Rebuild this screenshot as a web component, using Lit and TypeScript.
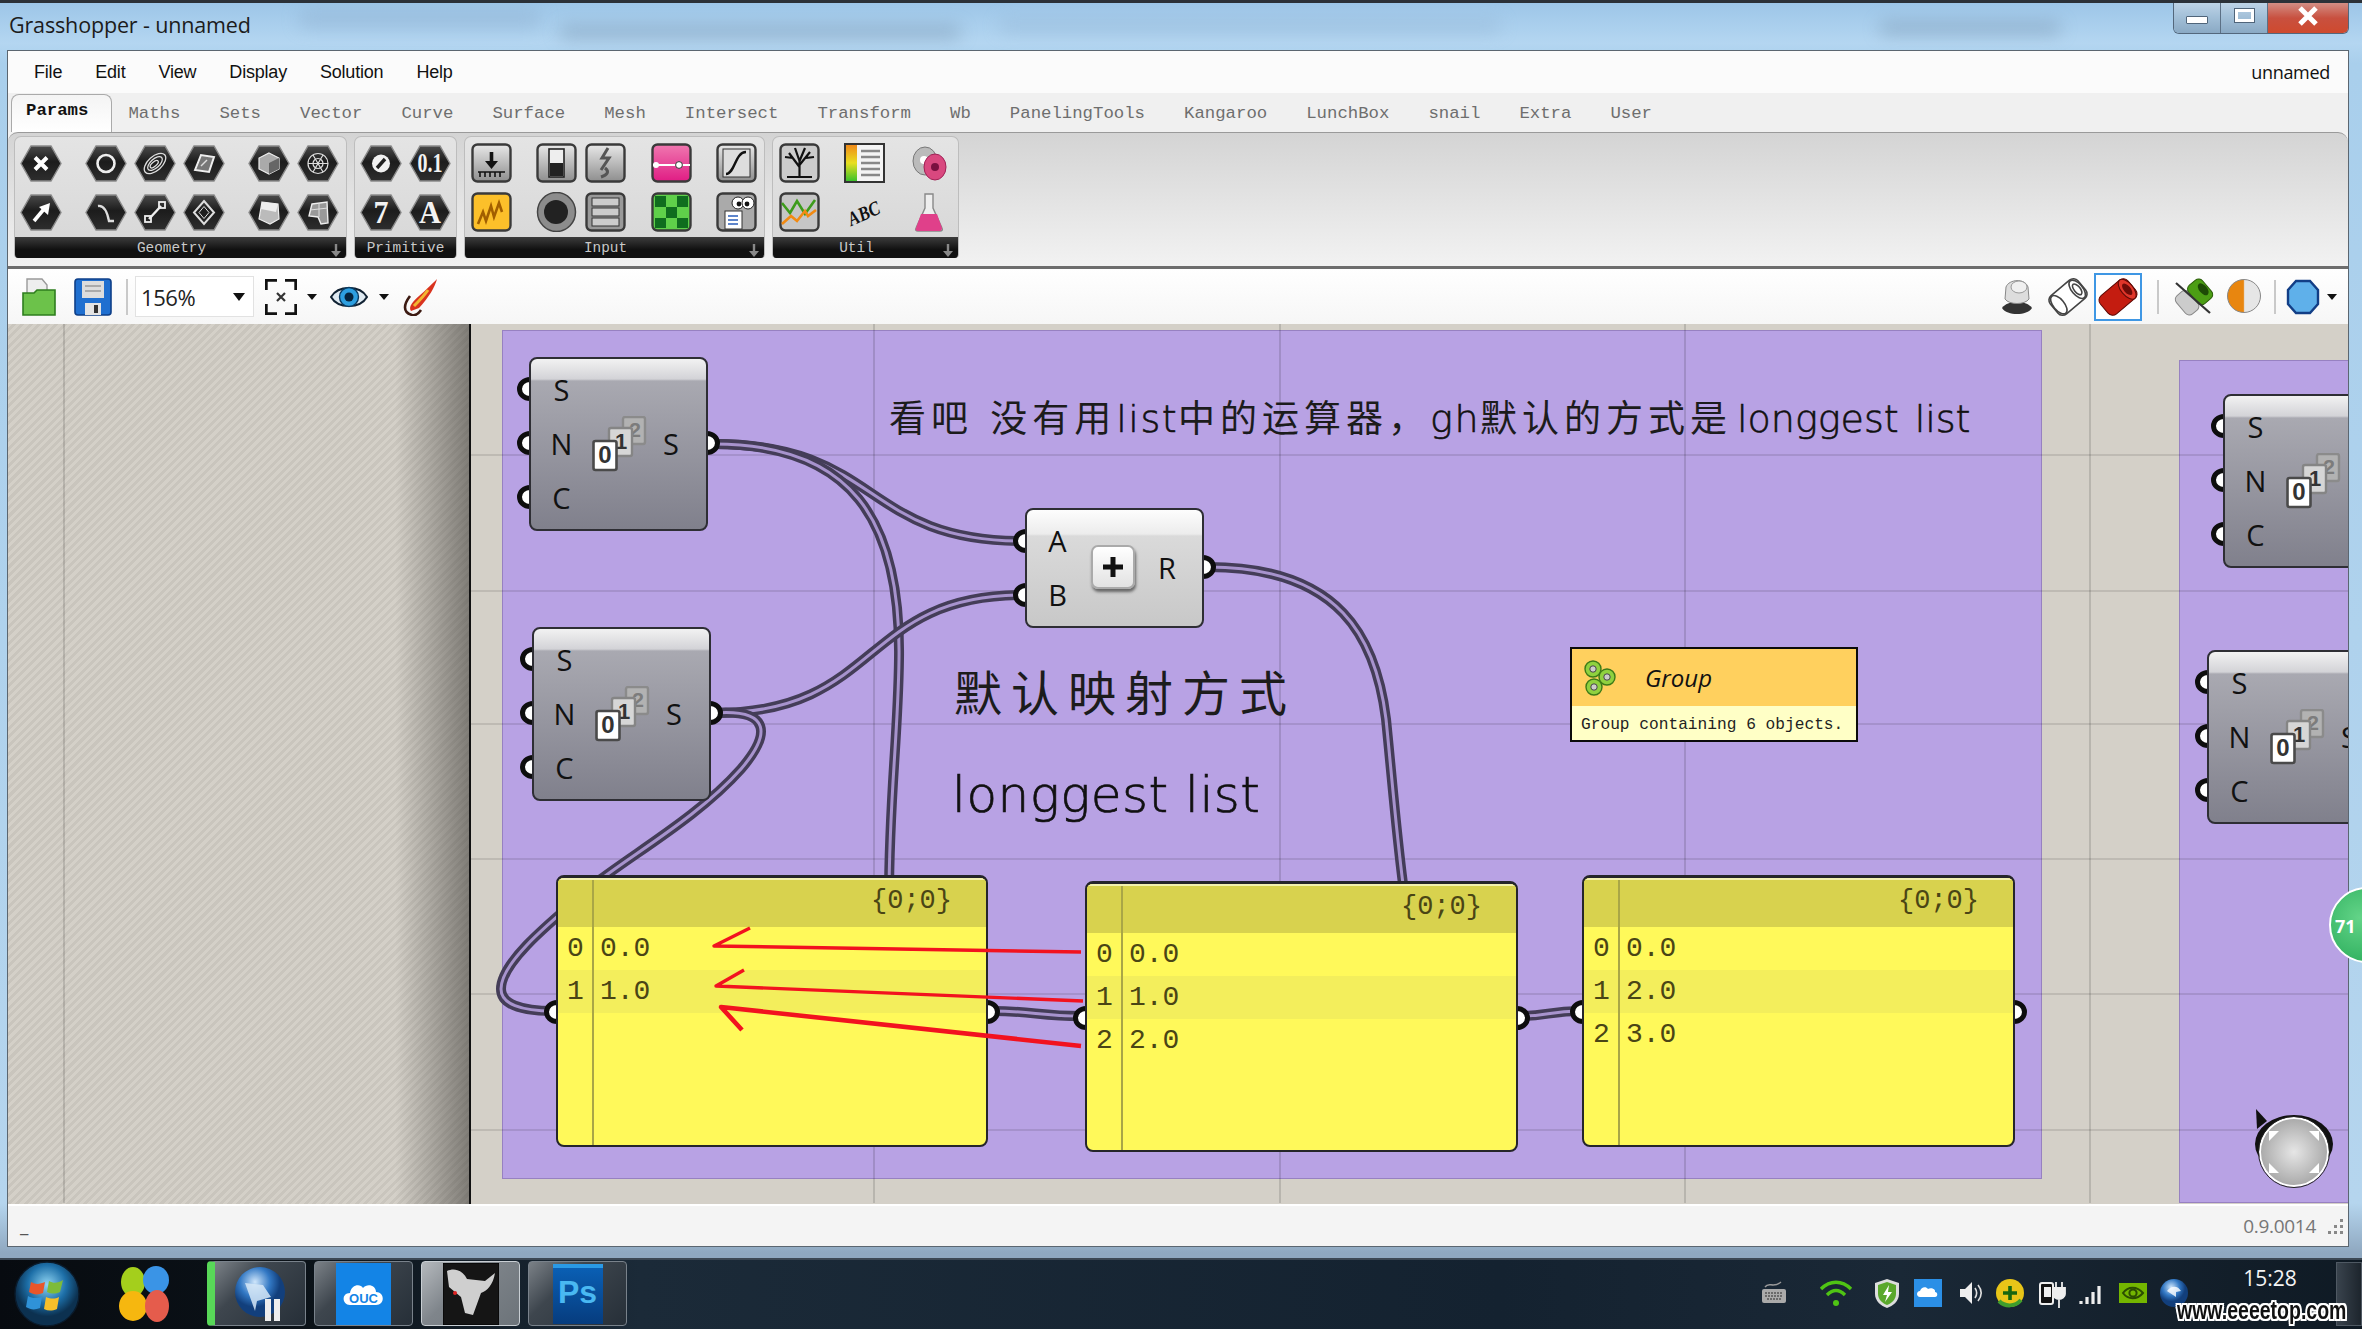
import { LitElement, html, css, svg } from 'lit'
import { customElement } from 'lit/decorators.js'

// canvas origin in page pixels, everything on the canvas is listed in page coords
const OX = 7
const OY = 325

const box = (x: number, y: number, w: number, h: number) =>
  `left:${x - OX}px;top:${y - OY}px;width:${w}px;height:${h}px`

const hex = (inner: unknown) => html`<svg class="ic" viewBox="0 0 42 37" width="42" height="37">
  <polygon points="11,1 31,1 41,18.5 31,36 11,36 1,18.5" fill="url(#hexFill)" stroke="#8a8a8a" stroke-width="1.4" />
  ${inner}
</svg>`

const sq = (inner: unknown, fill = 'url(#sqFill)') => html`<svg class="ic" viewBox="0 0 41 40" width="41" height="40">
  <rect x="1.5" y="1.5" width="38" height="37" rx="5" fill="${fill}" stroke="#3a3a3a" stroke-width="2.4" />
  ${inner}
</svg>`

const plain = (inner: unknown) => html`<svg class="ic" viewBox="0 0 41 40" width="41" height="40">${inner}</svg>`

const hexText = (t: string, size: number, len: number) =>
  svg`<text x="21" y="${18.5 + size * 0.33}" text-anchor="middle" font-family="Liberation Serif" font-weight="bold" font-size="${size}" fill="#f2f2f2" textLength="${len}" lengthAdjust="spacingAndGlyphs">${t}</text>`

const ICONS: Record<string, () => unknown> = {
  point: () => hex(svg`<path d="M15 12.5l12 12M27 12.5l-12 12" stroke="#fff" stroke-width="4" />`),
  circle: () => hex(svg`<circle cx="21" cy="18.5" r="8.5" fill="none" stroke="#eee" stroke-width="2.6" />`),
  curve: () => hex(svg`<g fill="none" stroke="#ddd" stroke-width="1.3" transform="rotate(-42 21 18.5)"><ellipse cx="21" cy="18.5" rx="13" ry="7" /><ellipse cx="21" cy="18.5" rx="9" ry="4.5" /><ellipse cx="20" cy="18.5" rx="5" ry="2.2" /></g>`),
  surface: () => hex(svg`<polygon points="12,25 18,10 31,12 26,27" fill="#777" stroke="#eee" stroke-width="2" /><path d="M18 21l6-6" stroke="#ddd" stroke-width="1.4" />`),
  cube: () => hex(svg`<polygon points="21,8 31,13 31,24 21,29 11,24 11,13" fill="#aaa" stroke="#eee" stroke-width="1.2" /><polygon points="21,18 31,13 31,24 21,29" fill="#666" />`),
  mesh: () => hex(svg`<g stroke="#ddd" stroke-width="1.2" fill="none"><circle cx="21" cy="18.5" r="10" /><circle cx="21" cy="18.5" r="5" /><path d="M11 18.5h20M16 10l10 17M26 10l-10 17" /></g>`),
  vector: () => hex(svg`<path d="M14 27l10-12" stroke="#fff" stroke-width="3.6" /><polygon points="30,9 28,21 19,13" fill="#fff" />`),
  arc: () => hex(svg`<path d="M13 12c6-1 9 5 11 15h5" fill="none" stroke="#ddd" stroke-width="2.4" />`),
  line: () => hex(svg`<path d="M15 25l12-13" stroke="#eee" stroke-width="2.4" /><rect x="11" y="22" width="6" height="6" fill="none" stroke="#eee" stroke-width="1.8" /><rect x="25" y="8" width="6" height="6" fill="none" stroke="#eee" stroke-width="1.8" />`),
  plane: () => hex(svg`<g fill="none" stroke="#ddd"><polygon points="21,7 31,18.5 21,30 11,18.5" stroke-width="2" /><path d="M16 18.5l5-6 5 6-5 6z" stroke-width="1" /></g>`),
  brep: () => hex(svg`<polygon points="14,8 30,10 31,25 22,30 11,25" fill="#bbb" stroke="#eee" stroke-width="1.2" /><polygon points="14,8 30,10 28,18 13,15" fill="#eee" />`),
  geo: () => hex(svg`<polygon points="15,10 30,8 31,29 24,30 21,23 12,22" fill="#999" stroke="#eee" stroke-width="1.4" /><path d="M22 9v14M13 16l18-2" stroke="#ddd" />`),
  bool: () => hex(svg`<circle cx="21" cy="18.5" r="9" fill="#f2f2f2" /><path d="M17 23l8-9" stroke="#222" stroke-width="3.4" />`),
  num: () => hex(hexText('0.1', 27, 25)),
  int: () => hex(hexText('7', 32, 15)),
  text: () => hex(hexText('A', 31, 22)),
  data: () => sq(svg`<path d="M20.5 9v11" stroke="#111" stroke-width="3.6" /><polygon points="14,18 27,18 20.5,26" fill="#111" /><path d="M7 29h27M9 29v5M14 29v5M19 29v5M24 29v5M29 29v5" stroke="#111" stroke-width="1.6" />`),
  toggle: () => sq(svg`<rect x="13" y="6" width="15" height="28" fill="#eee" stroke="#222" stroke-width="1.6" /><rect x="14" y="20" width="13" height="13" fill="#222" />`),
  spark: () => sq(svg`<path d="M23 5l-6 10h7l-8 12M16 34c6-2 9-5 4-9" fill="none" stroke="#555" stroke-width="3" />`),
  slider: () => sq(svg`<path d="M2 22h37" stroke="#fff" stroke-width="2" /><circle cx="5" cy="22" r="3" fill="#fff" /><circle cx="28" cy="22" r="3.4" fill="#fff" stroke="#333" />`, 'url(#pinkFill)'),
  graph: () => sq(svg`<rect x="7" y="6" width="27" height="28" fill="#ddd" stroke="#333" /><path d="M10 31c9 0 9-22 20-22" fill="none" stroke="#111" stroke-width="2.4" />`),
  squig: () => sq(svg`<path d="M7 32l5-12 3 9 5-15 3 11 5-14 3 9" fill="none" stroke="#a25f00" stroke-width="2.6" />`, '#fcc02a'),
  button: () => plain(svg`<ellipse cx="20.5" cy="20" rx="19" ry="19.5" fill="#8c8c8c" stroke="#444" stroke-width="1.5" /><circle cx="20" cy="20" r="12" fill="#222" />`),
  list: () => sq(svg`<rect x="7" y="6" width="27" height="8" fill="#ccc" stroke="#333" /><rect x="7" y="16" width="27" height="8" fill="#ccc" stroke="#333" /><rect x="7" y="26" width="27" height="8" fill="#ccc" stroke="#333" />`, '#999'),
  check: () => sq(svg`<path d="M4 4h11v11H4zM26 4h11v11H26zM15 15h11v11H15zM4 26h11v10H4zM26 26h11v10H26z" fill="#0f6d1e" />`, '#5fd04a'),
  viewer: () => sq(svg`<circle cx="22" cy="11" r="6" fill="#fff" stroke="#222" /><circle cx="32" cy="11" r="6" fill="#fff" stroke="#222" /><circle cx="23" cy="12" r="2.4" fill="#111" /><circle cx="31" cy="12" r="2.4" fill="#111" /><rect x="9" y="19" width="17" height="18" fill="#fff" stroke="#333" /><path d="M12 24h10M12 28h10M12 32h10" stroke="#2a5dbb" stroke-width="1.6" />`, '#aaa'),
  tree: () => sq(svg`<path d="M20.5 34V18M20.5 24L10 10M20.5 22L31 9M20.5 18L16 5M20.5 18L26 5M14 15L6 14M27 15l8-1M8 34h25" stroke="#111" stroke-width="2.2" fill="none" />`, '#ccc'),
  legend: () => plain(svg`<rect x="1" y="1" width="39" height="38" fill="#f4f4f4" stroke="#333" stroke-width="2" /><rect x="2" y="2" width="11" height="36" fill="url(#legendFill)" /><path d="M17 8h19M17 14h19M17 20h19M17 26h19M17 32h19" stroke="#888" stroke-width="2.4" />`),
  ball: () => plain(svg`<ellipse cx="16" cy="18" rx="12" ry="14" fill="#bbb" stroke="#777" /><circle cx="15" cy="17" r="4" fill="#fff" /><ellipse cx="26" cy="24" rx="11" ry="13" fill="#d9487f" stroke="#a02055" /><circle cx="26" cy="24" r="4" fill="#7a1040" />`),
  chart: () => sq(svg`<path d="M3 11l8 10 7-12 8 13 10-14" fill="none" stroke="#3d9b1b" stroke-width="2.6" /><path d="M3 32l9-8 6 5 8-10 3 5 8-6" fill="none" stroke="#f28a12" stroke-width="2.6" />`, '#c6c6c6'),
  abc: () => plain(svg`<text x="20" y="28" text-anchor="middle" font-family="Liberation Serif" font-style="italic" font-weight="bold" font-size="20" fill="#111" textLength="33" lengthAdjust="spacingAndGlyphs" transform="rotate(-24 20 22)">ABC</text>`),
  flask: () => plain(svg`<path d="M16 2h8v14l9 20c1 2 0 3-2 3H9c-2 0-3-1-2-3l9-20z" fill="#eee" stroke="#888" stroke-width="1.4" /><path d="M12 22h16l5 14c0 2-1 3-2 3H9c-2 0-3-1-2-3z" fill="#e0408a" />`),
}

type Group = { name: string; w: number; arrow: boolean; gap: number; clusters: string[][] }

const GROUPS: Group[] = [
  { name: 'Geometry', w: 333, arrow: true, gap: 23, clusters: [['point', 'vector'], ['circle', 'arc', 'curve', 'line', 'surface', 'plane'], ['cube', 'brep', 'mesh', 'geo']] },
  { name: 'Primitive', w: 103, arrow: false, gap: 0, clusters: [['bool', 'int', 'num', 'text']] },
  { name: 'Input', w: 301, arrow: true, gap: 23.5, clusters: [['data', 'squig'], ['toggle', 'button', 'spark', 'list'], ['slider', 'check'], ['graph', 'viewer']] },
  { name: 'Util', w: 187, arrow: true, gap: 23, clusters: [['tree', 'chart'], ['legend', 'abc'], ['ball', 'flask']] },
]

const MENUS = ['File', 'Edit', 'View', 'Display', 'Solution', 'Help']
const TABS = ['Params', 'Maths', 'Sets', 'Vector', 'Curve', 'Surface', 'Mesh', 'Intersect', 'Transform', 'Wb', 'PanelingTools', 'Kangaroo', 'LunchBox', 'snail', 'Extra', 'User']

const GRID_X = [63, 873, 1279, 1684, 2089]
const GRID_Y = [456, 592, 725, 860, 995, 1131]

const WIRES = [
  'M713 445C880 445 860 542 1022 542',
  'M713 445C850 445 900 520 898 660C897 740 888 800 888 900',
  'M714 714C880 714 860 596 1022 596',
  'M714 714C770 710 770 735 740 770C700 815 640 850 600 880C560 915 500 960 500 990C500 1005 520 1012 552 1012',
  'M1207 568C1340 568 1375 640 1385 720C1392 790 1395 830 1402 885',
  'M992 1012C1030 1012 1040 1017 1080 1017',
  'M1521 1017C1545 1017 1550 1012 1578 1012',
]

const REDS = [
  { d: 'M1080 953L713 947L749 929', w: 3.4 },
  { d: 'M1082 1002L715 987L743 971', w: 3.4 },
  { d: 'M1080 1047L720 1008L741 1031', w: 4.6 },
]

type Node = { x: number; y: number; w: number; h: number; ins: [string, number][]; outs: [string, number][]; kind: string }

const seqNode = (x: number, y: number, w: number): Node => ({
  x, y, w, h: 174, kind: 'seq',
  ins: [['S', 32], ['N', 86], ['C', 140]],
  outs: [['S', 86]],
})

const NODES: Node[] = [
  seqNode(528, 358, 179),
  seqNode(531, 628, 179),
  seqNode(2222, 395, 179),
  seqNode(2206, 651, 179),
  { x: 1024, y: 509, w: 179, h: 120, kind: 'add', ins: [['A', 33], ['B', 87]], outs: [['R', 59]] },
]

const PANELS = [
  { x: 555, y: 876, w: 432, h: 272, rows: ['0.0', '1.0'] },
  { x: 1084, y: 882, w: 433, h: 271, rows: ['0.0', '1.0', '2.0'] },
  { x: 1581, y: 876, w: 433, h: 272, rows: ['0.0', '2.0', '3.0'] },
]

const TRAY: [string, unknown][] = [
  ['tk', svg`<rect x="5" y="12" width="24" height="14" rx="2" fill="#aaa" /><path d="M8 16h18M8 19h18M10 22h14" stroke="#555" stroke-width="1.6" stroke-dasharray="2 1" /><path d="M8 10c4-6 8 2 16-5" fill="none" stroke="#999" stroke-width="1.4" />`],
  ['wf', svg`<g fill="none" stroke="#4fc414" stroke-width="3.4"><path d="M2 12c9-9 21-9 30 0" /><path d="M8 18c6-6 12-6 18 0" /></g><circle cx="17" cy="26" r="3" fill="#4fc414" />`],
  ['sh', svg`<path d="M17 2l12 4v11c0 7-6 12-12 14-6-2-12-7-12-14V6z" fill="#ddd" /><path d="M17 5l9 3v9c0 5-4 9-9 11-5-2-9-6-9-11V8z" fill="#5aa82c" /><path d="M19 8l-6 10h4l-2 7 7-10h-4z" fill="#fff" />`],
  ['cl', svg`<rect x="3" y="2" width="28" height="28" fill="#2b8fe6" /><path d="M9 20c-4 0-4-6 0-6 1-4 6-5 8-2 3-2 8 0 7 3 3 0 3 5 0 5z" fill="#fff" />`],
  ['sp', svg`<polygon points="8,12 13,12 20,5 20,27 13,20 8,20" fill="#eee" /><path d="M23 11c2 3 2 7 0 10M26 8c4 5 4 11 0 16" fill="none" stroke="#ddd" stroke-width="1.6" />`],
  ['pl', svg`<circle cx="17" cy="16" r="14" fill="#e8c518" /><path d="M6 24c6 6 16 6 22-1" fill="none" stroke="#3f9d2c" stroke-width="4" /><path d="M17 9v14M10 16h14" stroke="#16660f" stroke-width="3.6" />`],
  ['pg', svg`<rect x="6" y="6" width="13" height="21" rx="2" fill="#111" stroke="#eee" stroke-width="2" /><rect x="10" y="10" width="7" height="10" fill="#eee" /><path d="M22 5v6M28 5v6M19 11h12v6c0 3-3 5-6 5s-6-2-6-5zM25 22v9" fill="#eee" stroke="#eee" stroke-width="1.8" />`],
  ['sg', svg`<path d="M6 24v3M12 20v7M18 15v12M24 9v18" stroke="#eee" stroke-width="3.2" />`],
  ['nv', svg`<rect x="3" y="6" width="28" height="20" fill="#74b600" /><path d="M7 16c5-7 14-7 20 0-6 7-15 7-20 0z" fill="none" stroke="#2b4d00" stroke-width="2" /><circle cx="17" cy="16" r="3.6" fill="none" stroke="#2b4d00" stroke-width="2" />`],
  ['gb', svg`<circle cx="17" cy="16" r="14" fill="url(#orbFill)" /><path d="M10 14c5-6 11-5 14 0l-5 1 0 5z" fill="#fff" opacity=".8" />`],
]

@customElement('app-root')
export class AppRoot extends LitElement {
  renderNode(n: Node) {
    return html`<div class="node ${n.kind}" style=${box(n.x, n.y, n.w, n.h)}>
      ${n.ins.map(([, y]) => html`<i class="port in" style="top:${y - 12}px"></i>`)}
      ${n.outs.map(([, y]) => html`<i class="port out" style="top:${y - 12}px"></i>`)}
      <div class="nbody">
        <div class="nlabels">${n.ins.map(([l]) => html`<span>${l}</span>`)}</div>
        ${n.kind === 'seq' ? this.seqIcon() : this.plusIcon()}
        <div class="nlabels right">${n.outs.map(([l]) => html`<span>${l}</span>`)}</div>
      </div>
    </div>`
  }

  seqIcon() {
    return html`<svg class="nicon" width="56" height="56" viewBox="0 0 56 56">
      <g font-family="Liberation Sans" font-weight="bold" text-anchor="middle">
        <rect x="31" y="1" width="22" height="27" rx="2" fill="#b2b2b2" stroke="#8b8b8b" stroke-width="2.4" />
        <text x="43" y="21" font-size="21" fill="#7c7c7c">2</text>
        <rect x="17" y="12" width="23" height="28" rx="2" fill="#d6d6d6" stroke="#858585" stroke-width="2.4" />
        <text x="29" y="33" font-size="22" fill="#333">1</text>
        <rect x="1.5" y="25" width="23" height="29" rx="2" fill="#fff" stroke="#4a4a4a" stroke-width="2.6" />
        <text x="13" y="47" font-size="24" fill="#333">0</text>
      </g>
    </svg>`
  }

  plusIcon() {
    return html`<div class="plus"><svg width="22" height="22" viewBox="0 0 22 22"><path d="M11 1v20M1 11h20" stroke="#111" stroke-width="5" /></svg></div>`
  }

  renderPanel(p: (typeof PANELS)[number]) {
    return html`<div class="panel" style=${box(p.x, p.y, p.w, p.h)}>
      <i class="port pin"></i><i class="port pout"></i>
      <div class="pbody">
        <div class="phead">{0;0}</div>
        ${p.rows.map((r, i) => html`<div class="prow"><span class="pidx">${i}</span><span>${r}</span></div>`)}
      </div>
    </div>`
  }

  renderNav() {
    return html`<svg class="nav" style=${box(2250, 1108, 90, 86)} viewBox="0 0 90 86">
      <ellipse cx="43" cy="37" rx="39" ry="29" fill="#111" />
      <polygon points="5,2 16,14 6,22" fill="#111" />
      <ellipse cx="43" cy="45" rx="34" ry="34" fill="url(#navFill)" stroke="#fff" stroke-width="2" />
      <ellipse cx="43" cy="45" rx="35.5" ry="35.5" fill="none" stroke="#222" />
      <g fill="#fff"><polygon points="18,24 28,24 18,34" /><polygon points="68,24 58,24 68,34" /><polygon points="18,66 28,66 18,56" /><polygon points="68,66 58,66 68,56" /></g>
    </svg>`
  }

  render() {
    return html`
      <svg class="defs" width="0" height="0">
        <defs>
          <linearGradient id="hexFill" x1="0" y1="0" x2="0" y2="1"><stop offset="0" stop-color="#4a4a4a" /><stop offset=".45" stop-color="#1c1c1c" /><stop offset="1" stop-color="#2e2e2e" /></linearGradient>
          <linearGradient id="sqFill" x1="0" y1="0" x2="0" y2="1"><stop offset="0" stop-color="#e8e8e8" /><stop offset="1" stop-color="#8e8e8e" /></linearGradient>
          <linearGradient id="pinkFill" x1="0" y1="0" x2="0" y2="1"><stop offset="0" stop-color="#f078b0" /><stop offset="1" stop-color="#e01c84" /></linearGradient>
          <linearGradient id="legendFill" x1="0" y1="0" x2="0" y2="1"><stop offset="0" stop-color="#f08a1a" /><stop offset=".5" stop-color="#e8df20" /><stop offset="1" stop-color="#3cc22c" /></linearGradient>
          <radialGradient id="navFill"><stop offset="0" stop-color="#e6e6e6" /><stop offset="1" stop-color="#a9a9a9" /></radialGradient>
          <radialGradient id="orbFill" cx=".4" cy=".3"><stop offset="0" stop-color="#cfe6fb" /><stop offset=".6" stop-color="#3278c4" /><stop offset="1" stop-color="#123f7c" /></radialGradient>
          <radialGradient id="startFill" cx=".5" cy=".35"><stop offset="0" stop-color="#8fd4f2" /><stop offset=".6" stop-color="#1d6fa8" /><stop offset="1" stop-color="#0c3150" /></radialGradient>
        </defs>
      </svg>
      <div class="window">
        <header class="title">
          <i class="smudge s1"></i><i class="smudge s2"></i><i class="smudge s3"></i><i class="smudge s4"></i>
          <span class="title-text">Grasshopper - unnamed</span>
          <div class="caption">
            <div class="cbtn min"><i></i></div>
            <div class="cbtn max"><i></i></div>
            <div class="cbtn close">
              <svg width="26" height="22" viewBox="0 0 26 22"><path d="M5 3l16 16M21 3L5 19" stroke="#fff" stroke-width="5" /></svg>
            </div>
          </div>
        </header>
        <div class="inner">
          <nav class="menu">
            ${MENUS.map((m) => html`<span>${m}</span>`)}
            <span class="doc">unnamed</span>
          </nav>
          <div class="tabs">
            ${TABS.map((t, i) => html`<span class="tab ${i === 0 ? 'active' : ''}">${t}</span>`)}
          </div>
          <div class="ribbon">
            ${GROUPS.map((g) => html`<section class="rgroup" style="width:${g.w}px">
              <div class="ricons" style="gap:${g.gap}px">
                ${g.clusters.map((c) => html`<div class="cluster">${c.map((n) => html`<div class="cell">${ICONS[n]()}</div>`)}</div>`)}
              </div>
              <footer class="rfoot ${g.arrow ? 'has-arrow' : ''}">
                <span>${g.name}</span>
                ${g.arrow ? html`<svg class="rarrow" width="10" height="14" viewBox="0 0 10 14"><path d="M5 1v8" stroke="#888" stroke-width="2.4" /><polygon points="0,8 10,8 5,14" fill="#888" /></svg>` : ''}
              </footer>
            </section>`)}
          </div>
          <div class="toolbar">
            ${this.renderToolbarLeft()}
            <div class="spacer"></div>
            ${this.renderToolbarRight()}
          </div>
          <main class="canvas">
            <div class="shade"></div>
            <div class="group" style=${box(501, 331, 1540, 849)}></div>
            <div class="group" style=${box(2178, 361, 171, 843)}></div>
            <svg class="layer" viewBox="${OX} ${OY} 2342 879" width="2342" height="879">
              ${GRID_X.map((x) => svg`<line x1="${x}" x2="${x}" y1="325" y2="1204" stroke="#000" stroke-opacity=".13" stroke-width="2" />`)}
              ${GRID_Y.map((y) => svg`<line x1="470" x2="2349" y1="${y}" y2="${y}" stroke="#000" stroke-opacity=".1" stroke-width="2" />`)}
              ${WIRES.map((d) => svg`<path d=${d} fill="none" stroke="#443d58" stroke-width="10" /><path d=${d} fill="none" stroke="#a793cd" stroke-width="3" />`)}
            </svg>
            ${NODES.map((n) => this.renderNode(n))}
            ${PANELS.map((p) => this.renderPanel(p))}
            <svg class="layer" viewBox="${OX} ${OY} 2342 879" width="2342" height="879">
              ${REDS.map((r) => svg`<path d=${r.d} fill="none" stroke="#f2121f" stroke-width="${r.w}" stroke-linejoin="round" />`)}
            </svg>
            <div class="note" style=${box(888, 392, 1100, 50)}>看吧 没有用<b>list</b>中的运算器，<b>gh</b>默认的方式是<b class="tail">longgest list</b></div>
            <div class="note big" style=${box(953, 660, 345, 62)}>默认映射方式</div>
            <div class="note latin" style=${box(951, 765, 330, 62)}>longgest list</div>
            <div class="tip" style=${box(1569, 648, 288, 95)}>
              <div class="tip-head">
                <svg width="36" height="36" viewBox="0 0 36 36"><g fill="#8fd13f" stroke="#3c7a18" stroke-width="1.4"><circle cx="12" cy="9" r="8" /><circle cx="26" cy="17" r="8" /><circle cx="13" cy="27" r="8" /></g><g fill="#ccc" stroke="#444"><circle cx="12" cy="9" r="3.2" /><circle cx="26" cy="17" r="3.2" /><circle cx="13" cy="27" r="3.2" /></g></svg>
                <span>Group</span>
              </div>
              <div class="tip-body">Group containing 6 objects.</div>
            </div>
            ${this.renderNav()}
          </main>
          <footer class="status">
            <span class="dash">_</span>
            <span class="ver">0.9.0014</span>
            <svg width="18" height="18" viewBox="0 0 18 18" fill="#888"><rect x="14" y="2" width="3" height="3" /><rect x="14" y="8" width="3" height="3" /><rect x="14" y="14" width="3" height="3" /><rect x="8" y="8" width="3" height="3" /><rect x="8" y="14" width="3" height="3" /><rect x="2" y="14" width="3" height="3" /></svg>
          </footer>
        </div>
      </div>
      ${this.renderTaskbar()}
      <div class="ball"><span>71</span></div>
      <div class="mark">www.eeeetop.com</div>
    `
  }

  renderToolbarLeft() {
    return html`
      <svg class="tb first" width="34" height="38" viewBox="0 0 34 38">
        <path d="M5 1h15l5 6v10H5z" fill="#eee" stroke="#999" stroke-width="1.4" />
        <path d="M1 15h11l3-3h18v25H1z" fill="#6cc24a" stroke="#2e7d1e" stroke-width="1.6" />
      </svg>
      <svg class="tb save" width="38" height="38" viewBox="0 0 38 38">
        <rect x="1" y="1" width="36" height="36" rx="3" fill="#1f6fd0" stroke="#0e3f88" stroke-width="1.6" />
        <rect x="8" y="3" width="22" height="17" fill="#ddd" /><path d="M11 8h16M11 13h16" stroke="#aaa" stroke-width="2" />
        <rect x="11" y="25" width="16" height="12" fill="#e4e4e4" /><rect x="20" y="27" width="4" height="8" fill="#333" />
      </svg>
      <i class="sep"></i>
      <div class="combo"><span>156%</span><i class="drop"></i></div>
      <svg class="tb fit" width="32" height="36" viewBox="0 0 32 36">
        <path d="M1 11V1h11M20 1h11v10M31 25v10H20M12 35H1V25" fill="none" stroke="#111" stroke-width="3.4" />
        <path d="M12 14l8 8M20 14l-8 8" stroke="#333" stroke-width="2.2" />
      </svg>
      <i class="drop sm"></i>
      <svg class="tb eye" width="38" height="30" viewBox="0 0 38 30">
        <path d="M1 15C8 3 30 3 37 15 30 27 8 27 1 15z" fill="#dfeaf2" stroke="#123" stroke-width="2" />
        <circle cx="19" cy="15" r="9.5" fill="#2d9fe0" stroke="#0a3a60" stroke-width="1.4" /><circle cx="19" cy="15" r="4.5" fill="#06243c" />
      </svg>
      <i class="drop sm"></i>
      <svg class="tb pen" width="36" height="38" viewBox="0 0 36 38">
        <path d="M35 1c-2 8-8 18-18 29l-8 3c-3-4 2-10 8-15C24 12 31 5 35 1z" fill="#d9331f" />
        <path d="M26 12c-4 6-8 10-14 16" stroke="#f2b632" stroke-width="3" fill="none" />
        <path d="M8 18c-6 8-8 16 2 19 4 1 7-2 9-5" fill="none" stroke="#3c1a12" stroke-width="2.6" />
      </svg>
    `
  }

  renderToolbarRight() {
    return html`
      <svg class="tr" width="40" height="40" viewBox="0 0 40 40">
        <path d="M5 31c5-8 25-8 30 0-5 8-25 8-30 0z" fill="#333" />
        <path d="M9 10c3-8 19-9 22 0l1 12c-4 6-20 6-24 0z" fill="#ddd" stroke="#888" />
        <ellipse cx="22" cy="10" rx="8" ry="6" fill="#f0f0f0" stroke="#999" />
      </svg>
      <svg class="tr second" width="42" height="40" viewBox="0 0 42 40">
        <g fill="#fff" stroke="#444" stroke-width="1.6" transform="rotate(-40 21 20)">
          <rect x="3" y="8" width="36" height="24" rx="6" />
          <ellipse cx="9" cy="20" rx="5.5" ry="11" /><ellipse cx="33" cy="20" rx="5.5" ry="11" /><ellipse cx="33" cy="20" rx="3" ry="6.5" />
        </g>
      </svg>
      <div class="selected">
        <svg width="40" height="40" viewBox="0 0 40 40">
          <g transform="rotate(-40 20 20)">
            <rect x="2" y="8" width="36" height="24" rx="6" fill="#c41c10" stroke="#5e0a06" />
            <ellipse cx="32" cy="20" rx="6" ry="12" fill="#e0362a" stroke="#5e0a06" /><ellipse cx="32" cy="20" rx="3.4" ry="7" fill="#6e0c08" />
          </g>
        </svg>
      </div>
      <i class="sep r"></i>
      <svg class="tr" width="42" height="40" viewBox="0 0 42 40">
        <g transform="rotate(-40 21 20)">
          <rect x="4" y="8" width="16" height="24" rx="5" fill="#ccc" stroke="#888" />
          <rect x="20" y="8" width="18" height="24" rx="5" fill="#4c9e14" stroke="#2a5d08" />
          <ellipse cx="33" cy="20" rx="4" ry="7" fill="#1d4a06" />
        </g>
        <path d="M3 6l34 30" stroke="#333" stroke-width="2.2" />
      </svg>
      <svg class="tr sphere" width="36" height="40" viewBox="0 0 36 40">
        <defs><linearGradient id="halfFill"><stop offset=".48" stop-color="#e8860f" /><stop offset=".52" stop-color="#e6e6e6" /></linearGradient></defs>
        <circle cx="18" cy="19" r="16.5" fill="url(#halfFill)" stroke="#888" />
      </svg>
      <i class="sep r2"></i>
      <svg class="tr" width="34" height="36" viewBox="0 0 34 36">
        <polygon points="10,2 24,2 32,11 32,25 24,34 10,34 2,25 2,11" fill="#5fb0ea" stroke="#123e86" stroke-width="2.4" />
      </svg>
      <i class="drop sm last"></i>
    `
  }

  renderTaskbar() {
    return html`<div class="taskbar">
      <svg class="orb" width="66" height="66" viewBox="0 0 66 66">
        <circle cx="33" cy="33" r="32" fill="url(#startFill)" stroke="#0a1a2a" stroke-width="1.4" />
        <path d="M17 21c5 3 9 2 14 0l-2 11c-5 2-9 2-14-1z" fill="#e8562a" /><path d="M35 20c5 3 9 2 14-1l-3 12c-5 2-8 2-13 0z" fill="#7dbb3a" />
        <path d="M14 35c5 3 9 2 14 1l-2 11c-5 2-9 2-14-1z" fill="#2f92d8" /><path d="M32 36c5 2 9 2 13 0l-2 12c-5 2-9 2-13 0z" fill="#f6bf2a" />
      </svg>
      <svg class="pin-logo" width="54" height="58" viewBox="0 0 54 58">
        <ellipse cx="15" cy="17" rx="12" ry="15" fill="#a4cf1c" /><ellipse cx="38" cy="15" rx="13" ry="14" fill="#3a94e6" />
        <ellipse cx="15" cy="41" rx="14" ry="15" fill="#f6b70f" /><ellipse cx="39" cy="41" rx="12" ry="16" fill="#e55c4c" />
      </svg>
      <div class="task run">
        <svg width="54" height="62" viewBox="0 0 54 62">
          <circle cx="27" cy="29" r="25" fill="url(#orbFill)" />
          <path d="M12 20l18 2 8 12-14 4-2 10z" fill="#d6e8f7" opacity=".85" />
          <rect x="32" y="36" width="6" height="22" fill="#eee" /><rect x="41" y="36" width="6" height="22" fill="#eee" />
        </svg>
      </div>
      <div class="task">
        <div class="ouc"><svg width="44" height="34" viewBox="0 0 44 34"><path d="M8 28c-8 0-9-12 0-12 1-8 10-10 13-5 4-5 13-3 13 4 9 0 9 13 0 13z" fill="#fff" /></svg><span>OUC</span></div>
      </div>
      <div class="task on">
        <svg width="56" height="62" viewBox="0 0 56 62">
          <rect width="56" height="62" fill="#151515" stroke="#000" /><path d="M4 8c8-4 16 0 20 8l18 2 10-8c-2 12-8 18-14 20l-8 22-8-2-4-16-12-10z" fill="#cfcfcf" /><circle cx="12" cy="30" r="2" fill="#d22" />
        </svg>
      </div>
      <div class="task">
        <div class="ps">Ps</div>
      </div>
      <div class="tray">
        ${TRAY.map(([k, g]) => html`<svg class="tray-ic ${k}" width="34" height="34" viewBox="0 0 34 34">${g}</svg>`)}
      </div>
      <div class="clock">15:28</div>
      <div class="desk"></div>
    </div>`
  }

  static styles = css`
    :host {
      display: block;
      position: relative;
      width: 2362px;
      height: 1329px;
      overflow: hidden;
      font-family: 'Liberation Sans', sans-serif;
      background: #0f1a24;
    }
    .defs {
      position: absolute;
    }

    .window {
      height: 1258px;
      display: flex;
      flex-direction: column;
      padding: 0 13px 11px 7px;
      box-sizing: border-box;
      background: linear-gradient(180deg, #9dc6e8 0, #b4d6f1 40px, #a9cfec 60px, #b5d5ee 1200px, #8fa8c0 1250px);
      border-top: 3px solid #2b3138;
    }
    .title {
      position: relative;
      height: 47px;
      flex: none;
      margin: 0 -13px 0 -7px;
      overflow: hidden;
    }
    .title-text {
      position: absolute;
      left: 9px;
      top: 7px;
      font: 21.5px 'Open Sans', sans-serif;
      color: #1c1c1c;
      letter-spacing: -0.15px;
    }
    .smudge {
      position: absolute;
      background: #6b86a0;
      filter: blur(9px);
      opacity: 0.55;
      height: 16px;
      top: 14px;
    }
    .s1 { left: 300px; width: 240px; background: #8fb0d0; top: 8px; }
    .s2 { left: 560px; width: 400px; top: 24px; height: 10px; }
    .s3 { left: 1000px; width: 500px; background: #8fb0d0; top: 18px; height: 10px; }
    .s4 { left: 1880px; width: 180px; top: 20px; height: 10px; }

    .caption {
      position: absolute;
      left: 2173px;
      top: -3px;
      width: 176px;
      height: 34px;
      display: flex;
      border: 1px solid #53677c;
      border-top: none;
      border-radius: 0 0 6px 6px;
      overflow: hidden;
      box-sizing: border-box;
    }
    .cbtn {
      width: 47px;
      display: flex;
      align-items: center;
      justify-content: center;
      background: linear-gradient(180deg, #c3d8ea, #a3c0d8 50%, #8aa9c4);
      border-right: 1px solid #5c7085;
      padding-bottom: 2px;
      box-sizing: border-box;
    }
    .min i {
      width: 20px;
      height: 6px;
      margin-top: 8px;
      background: #fff;
      border: 1px solid #50657a;
      border-radius: 1px;
    }
    .max i {
      width: 13px;
      height: 7px;
      border: 3px solid #fff;
      outline: 1px solid #50657a;
    }
    .close {
      flex: 1;
      background: linear-gradient(180deg, #d59a92, #c8503f 55%, #cf4a2e);
      border: none;
    }

    .inner {
      flex: 1;
      min-height: 0;
      display: flex;
      flex-direction: column;
      background: #f2f2f2;
      border: 1px solid #5b6670;
      box-sizing: border-box;
    }
    .menu {
      height: 42px;
      flex: none;
      display: flex;
      align-items: center;
      gap: 33px;
      padding-left: 26px;
      padding-right: 18px;
      font-size: 18px;
      color: #111;
      background: #fbfbfb;
      letter-spacing: -0.2px;
    }
    .doc {
      margin-left: auto;
      font: 18px 'Open Sans', sans-serif;
      letter-spacing: -0.3px;
    }
    .tabs {
      height: 39px;
      flex: none;
      display: flex;
      gap: 39px;
      padding: 11px 0 0 17px;
      box-sizing: border-box;
      background: #f0f0f0;
      font: 17.33px 'Liberation Mono', monospace;
      color: #6e6e6e;
      position: relative;
    }
    .tab.active {
      margin: -10px -23px 0 -14px;
      padding: 6px 23px 0 14px;
      height: 38px;
      box-sizing: border-box;
      background: linear-gradient(180deg, #f4f4f4, #fff);
      border: 1px solid #aaa;
      border-bottom: none;
      border-radius: 8px 8px 0 0;
      color: #111;
      font-weight: bold;
    }
    .ribbon {
      height: 137px;
      flex: none;
      display: flex;
      gap: 7px;
      padding: 3px 0 0 6px;
      box-sizing: border-box;
      background: linear-gradient(180deg, #d4d4d4, #f2f2f2);
      border-top: 1px solid #9a9a9a;
      border-bottom: 3px solid #6d6d6d;
      border-radius: 10px 10px 0 0;
    }
    .rgroup {
      height: 122px;
      display: flex;
      flex-direction: column;
      border: 1px solid #bdbdbd;
      border-bottom: none;
      border-radius: 7px 7px 4px 4px;
      box-sizing: border-box;
      background: linear-gradient(180deg, #e4e4e4, #d6d6d6);
      overflow: hidden;
    }
    .ricons {
      flex: 1;
      display: flex;
      padding: 6px 0 0 5px;
    }
    .cluster {
      display: grid;
      grid-auto-flow: column;
      grid-template-rows: 40px 40px;
      gap: 9px 7px;
    }
    .cell {
      width: 42px;
      height: 40px;
      display: flex;
      align-items: center;
      justify-content: center;
    }
    .ic {
      display: block;
      flex: none;
    }
    .rfoot {
      height: 21px;
      flex: none;
      position: relative;
      display: flex;
      align-items: center;
      justify-content: center;
      background: linear-gradient(180deg, #3c3c3c, #111 60%);
      color: #c9c9c9;
      font: 14.4px 'Liberation Mono', monospace;
    }
    .rfoot.has-arrow {
      padding-right: 18px;
    }
    .rarrow {
      position: absolute;
      right: 5px;
      bottom: 1px;
    }
    .toolbar {
      height: 55px;
      flex: none;
      display: flex;
      align-items: center;
      padding-left: 14px;
      background: linear-gradient(180deg, #fff, #f6f6f6);
    }
    .spacer {
      flex: 1;
    }
    .save {
      margin-left: 18px;
    }
    .sep {
      width: 2px;
      height: 36px;
      margin: 0 7px 0 14px;
      background: #c9c9c9;
    }
    .combo {
      width: 119px;
      height: 41px;
      box-sizing: border-box;
      display: flex;
      align-items: center;
      padding: 0 8px 0 5px;
      background: #fff;
      border: 1px solid #e2e2e2;
      font: 22px 'Open Sans', sans-serif;
      color: #222;
      letter-spacing: -0.4px;
    }
    .drop {
      display: block;
      width: 0;
      height: 0;
      border: 6px solid transparent;
      border-top: 8px solid #111;
      border-bottom: none;
      margin-left: auto;
    }
    .drop.sm {
      border-width: 5px;
      border-top-width: 6px;
      border-bottom: none;
      margin: 0;
    }
    .fit { margin-left: 11px; }
    .fit + .drop { margin-left: 10px; }
    .eye { margin-left: 13px; }
    .eye + .drop { margin-left: 11px; }
    .pen { margin-left: 13px; }
    .tr { flex: none; }
    .second { margin-left: 10px; }
    .sphere { margin-left: 11px; }
    .selected {
      width: 48px;
      height: 48px;
      box-sizing: border-box;
      border: 2px solid #3f97e4;
      background: #fff;
      display: flex;
      align-items: center;
      justify-content: center;
      margin: 0 0 0 5px;
    }
    .sep.r { height: 34px; margin: 0 14px 0 15px; }
    .sep.r2 { height: 34px; margin: 0 10px 0 12px; }
    .drop.sm.last { margin: 0 11px 0 7px; }

    .canvas {
      flex: 1;
      min-height: 0;
      position: relative;
      overflow: hidden;
      background: #d4d0c8;
    }
    .shade {
      position: absolute;
      left: 0;
      top: 0;
      bottom: 0;
      width: 463px;
      box-sizing: border-box;
      border-right: 2px solid #111;
      background:
        linear-gradient(90deg, transparent 84%, rgba(60, 58, 54, 0.55)),
        repeating-linear-gradient(135deg, #d4d0c8 0 3px, #c9c5bd 3px 6px);
    }
    .group {
      position: absolute;
      background: #b8a2e4;
      box-shadow: inset 0 0 0 1px rgba(90, 70, 130, 0.35);
    }
    .layer {
      position: absolute;
      left: 0;
      top: 0;
    }
    .node {
      position: absolute;
    }
    .port {
      position: absolute;
      width: 26px;
      height: 24px;
      box-sizing: border-box;
      border: 5px solid #0d0d0d;
      border-radius: 50%;
      background: #fff;
    }
    .port.in { left: -12px; }
    .port.out { right: -12px; }
    .nbody {
      position: absolute;
      inset: 0;
      display: flex;
      justify-content: space-between;
      box-sizing: border-box;
      border: 2px solid #2e2e34;
      border-radius: 8px;
      background:
        linear-gradient(180deg, #f2f2f2 0, #d3d3d7 20px, #a9a9b1 22px, #80808c 100%);
      font: 29px 'Open Sans', sans-serif;
      color: #111;
    }
    .add .nbody {
      background: linear-gradient(180deg, #fdfdfd 0, #ececec 24px, #dadada 26px, #c8c8c8 100%);
    }
    .nlabels {
      display: flex;
      flex-direction: column;
      justify-content: center;
      width: 61px;
      align-items: center;
      gap: 14px;
    }
    .nlabels span {
      height: 40px;
      line-height: 40px;
    }
    .nlabels.right {
      width: 70px;
    }
    .nicon {
      position: absolute;
      left: 61px;
      top: 57px;
    }
    .plus {
      position: absolute;
      left: 64px;
      top: 35px;
      width: 44px;
      height: 44px;
      box-sizing: border-box;
      display: flex;
      align-items: center;
      justify-content: center;
      background: linear-gradient(180deg, #fff, #e2e2e2);
      border: 2px solid #aaa;
      border-radius: 7px;
      box-shadow: 1px 3px 3px rgba(0, 0, 0, 0.5);
    }

    .panel {
      position: absolute;
    }
    .port.pin,
    .port.pout {
      top: 125px;
    }
    .pin.port { left: -12px; }
    .pout.port { right: -12px; }
    .pbody {
      position: absolute;
      inset: 0;
      box-sizing: border-box;
      border: 2px solid #25252a;
      border-top-width: 3px;
      border-radius: 8px;
      overflow: hidden;
      background: linear-gradient(90deg, transparent 34px, #a9a646 34px, #a9a646 36px, transparent 36px), #fff95a;
      font: 28px 'Liberation Mono', monospace;
      color: #4a4515;
    }
    .phead {
      height: 49px;
      box-sizing: border-box;
      padding: 2px 34px 0 0;
      text-align: right;
      font-size: 27px;
      line-height: 38px;
      background: linear-gradient(90deg, transparent 34px, #a9a646 34px, #a9a646 36px, transparent 36px), #d8d24e;
      border-top: 2px solid #f3f1b0;
    }
    .prow {
      height: 43px;
      line-height: 43px;
      display: flex;
    }
    .prow:nth-child(odd) {
      background: linear-gradient(90deg, transparent 34px, #a9a646 34px, #a9a646 36px, transparent 36px), #f3ee5c;
    }
    .pidx {
      width: 42px;
      text-align: center;
      padding-right: 7px;
      box-sizing: border-box;
    }

    .note {
      position: absolute;
      font: 400 37px 'Noto Sans CJK SC', sans-serif;
      letter-spacing: 5px;
      word-spacing: 4px;
      color: #1c1c1c;
      white-space: nowrap;
      line-height: 50px;
    }
    .note b {
      font: 200 38px 'DejaVu Sans', 'Noto Sans', sans-serif;
      letter-spacing: 1.5px;
      color: #111;
      -webkit-text-stroke: 0.6px #111;
    }
    .note b.tail {
      letter-spacing: 0;
      margin-left: 5px;
    }
    .note.big {
      font-size: 48px;
      letter-spacing: 9px;
      line-height: 62px;
    }
    .note.latin {
      font: 200 50px 'DejaVu Sans', 'Noto Sans', sans-serif;
      letter-spacing: 0.5px;
      word-spacing: 0;
      line-height: 62px;
      color: #111;
      -webkit-text-stroke: 0.7px #111;
    }
    .tip {
      position: absolute;
      box-sizing: border-box;
      border: 2px solid #0b0b0b;
      background: #ffffc6;
      display: flex;
      flex-direction: column;
    }
    .tip-head {
      height: 57px;
      flex: none;
      display: flex;
      align-items: center;
      padding-left: 9px;
      gap: 28px;
      background: #ffd05e;
      font: italic 24px 'Open Sans', sans-serif;
      color: #111;
    }
    .tip-body {
      flex: 1;
      display: flex;
      align-items: center;
      padding: 3px 0 0 9px;
      font: 16.2px 'Liberation Mono', monospace;
      color: #222;
    }
    .nav {
      position: absolute;
    }
    .status {
      height: 42px;
      flex: none;
      position: relative;
      display: flex;
      align-items: center;
      padding: 0 4px 0 12px;
      background: #f4f4f4;
      border-top: 2px solid #fff;
      box-sizing: border-box;
      color: #555;
      font: 19px 'Open Sans', sans-serif;
    }
    .dash {
      margin-top: -2px;
    }
    .ver {
      margin-left: auto;
      margin-right: 10px;
      color: #777;
      letter-spacing: -0.3px;
    }

    .taskbar {
      height: 71px;
      display: flex;
      align-items: center;
      position: relative;
      background: linear-gradient(90deg, #070b10 0, #0b1218 300px, #1b2a38 640px, #142230 1500px, #1a2836 1900px, #0f1a24 2362px);
      box-shadow: inset 0 2px 0 #3c4854;
    }
    .orb {
      margin-left: 14px;
      flex: none;
    }
    .pin-logo {
      margin: 0 35px 0 38px;
      flex: none;
    }
    .task {
      width: 99px;
      height: 65px;
      margin-right: 8px;
      box-sizing: border-box;
      display: flex;
      align-items: center;
      justify-content: center;
      border: 1px solid #79828b;
      border-radius: 4px;
      background: linear-gradient(135deg, #7b8187 0, #3e464e 35%, #262f38 100%);
    }
    .task.run {
      border-left: 8px solid #58d858;
    }
    .task.on {
      background: linear-gradient(135deg, #b5b9bd 0, #7f858b 40%, #6c7379 100%);
      border-color: #c8ced3;
    }
    .ouc {
      width: 55px;
      height: 62px;
      position: relative;
      display: flex;
      align-items: center;
      justify-content: center;
      background: #1384e6;
    }
    .ouc span {
      position: absolute;
      font-size: 13px;
      font-weight: bold;
      color: #1384e6;
      top: 28px;
    }
    .ps {
      width: 50px;
      height: 60px;
      background: linear-gradient(180deg, #0a5fb4, #063c7e);
      border-top: 4px solid #2a9ae6;
      box-sizing: border-box;
      color: #49b8f2;
      font: bold 32px 'Liberation Sans', sans-serif;
      text-align: center;
      line-height: 48px;
    }
    .tray {
      margin-left: 1117px;
      display: flex;
      align-items: center;
      gap: 7px;
      flex: none;
      padding-left: 5px;
    }
    .tray-ic {
      flex: none;
    }
    .tk { margin-right: 21px; }
    .wf { margin-right: 10px; }
    .clock {
      flex: 1;
      align-self: flex-start;
      margin-top: 6px;
      text-align: center;
      color: #f4f4f4;
      font: 21px 'Open Sans', sans-serif;
      padding-left: 13px;
      box-sizing: border-box;
    }
    .desk {
      width: 26px;
      height: 64px;
      flex: none;
      box-sizing: border-box;
      border: 1px solid #4f5963;
      background: linear-gradient(90deg, #39434d, #1d252d);
    }
    .ball {
      position: absolute;
      left: 2329px;
      top: 887px;
      width: 76px;
      height: 76px;
      box-sizing: border-box;
      border: 2px solid #fff;
      border-radius: 50%;
      background: radial-gradient(circle at 40% 40%, #63d488, #21a653);
      color: #fff;
      font: bold 18px 'Open Sans', sans-serif;
      padding: 25px 0 0 4px;
    }
    .mark {
      position: absolute;
      left: 2177px;
      top: 1296px;
      white-space: nowrap;
      font: bold 25px 'Liberation Sans', sans-serif;
      color: #111;
      transform-origin: left center;
      transform: scaleX(0.78);
      text-shadow: 2px 0 #fff, -2px 0 #fff, 0 2px #fff, 0 -2px #fff, 2px 2px #fff, -2px -2px #fff, 2px -2px #fff, -2px 2px #fff;
    }
  `
}

declare global {
  interface HTMLElementTagNameMap {
    'app-root': AppRoot
  }
}
